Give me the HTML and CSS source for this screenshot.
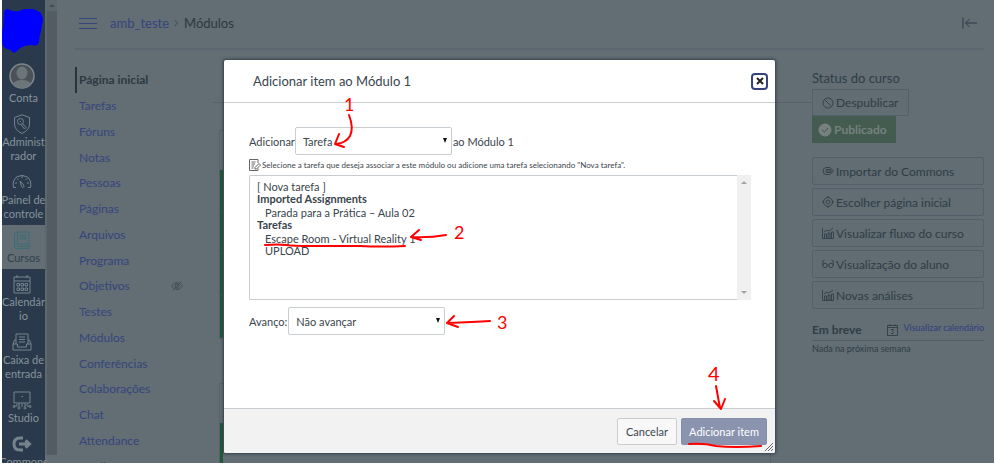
FILE: index.html
```html
<!DOCTYPE html>
<html lang="pt-BR">

<head>
    <meta charset="UTF-8">
    <title>amb_teste: Módulos</title>
    <link rel="stylesheet" href="styles.css">
</head>

<body>
    <div class="app">
        <nav class="global-nav">
            <div class="logo">
                <svg width="43" height="47" viewBox="0 0 43 47"><path d="M2 5Q4 0 8 3Q12 5 17 4L22 2L31 2Q40 4 41 12L39 24Q37 29 37 35Q36 40 30 38Q22 38 17 42L15 44Q11 48 9 43Q1 42 0 36Q-1 28 1 20Z" fill="#0000ff"/></svg>
            </div>
            <a href="#" class="nav-item account">
                <svg width="26" height="26" viewBox="0 0 26 26"><circle cx="13" cy="13" r="12" fill="#4a5257" stroke="#7d878c" stroke-width="1.5"/><ellipse cx="13" cy="10" rx="5.5" ry="6.5" fill="#6b757a"/><path d="M4 21Q6 17 13 17T22 21Q18 25 13 25T4 21Z" fill="#6b757a"/></svg>
                <span>Conta</span>
            </a>
            <a href="#" class="nav-item">
                <svg class="icon" viewBox="0 0 20 20"><path d="M10 0.800L17.500 3.500V10Q17.500 16 10 19.500Q2.500 16 2.500 10V3.500Z"/><circle cx="8.500" cy="7.500" r="3"/><path d="M10.500 9.500L14 13.500L12.500 15L9 10.500M8 7L9 8"/></svg>
                <span>Administ<br>rador</span>
            </a>
            <a href="#" class="nav-item">
                <svg class="icon" viewBox="0 0 20 20"><path d="M4 15.500H1.500Q0 8 5 4.800Q10 2 15 4.800Q20 8 18.500 15.500H16M8 9L9.500 14.500Q11 17 12 14.500Q12 12.500 8 9ZM3 11H5M15 11H17M10 4V6M5 6.500L6.500 8M15 6.500L13.500 8"/></svg>
                <span>Painel de<br>controle</span>
            </a>
            <a href="#" class="nav-item active">
                <svg class="icon" viewBox="0 0 20 20"><path d="M17 14V2H5Q2.500 2 2.500 4.500V16Q2.500 18.500 5 18.500H17M17 14H5Q2.500 14 2.500 16M17 14V18.500M5 16.300H17M5.500 2V14M8 5H14V9H8ZM9.500 7H12.500"/></svg>
                <span>Cursos</span>
            </a>
            <a href="#" class="nav-item">
                <svg class="icon" viewBox="0 0 20 20"><path d="M2 3H18V19H2ZM2 7H18M5 1V4M15 1V4M5 9.500H7.500V12H5ZM9 9.500H11.500V12H9ZM13 9.500H15.500V12H13ZM5 14H7.500V16.500H5ZM9 14H11.500V16.500H9ZM13 14H15.500V16.500H13Z"/></svg>
                <span>Calendár<br>io</span>
            </a>
            <a href="#" class="nav-item">
                <svg class="icon" viewBox="0 0 20 20"><path d="M4 12V2H16V12M7 5H13M7 7.500H13M7 10H13M4 8H2.500L1 12V18H19V12L17.500 8H16M1 12H5.500V15H14.500V12H19"/></svg>
                <span>Caixa de<br>entrada</span>
            </a>
            <a href="#" class="nav-item">
                <svg class="icon" viewBox="0 0 20 20"><path d="M2 2H18V13H2ZM9.500 6.500H11M7 13V17M10 13V17M13 13V17M5 14V16H2.500M15 14V16H17.500"/><circle cx="2" cy="16.500" r="1"/><circle cx="7" cy="18" r="1"/><circle cx="13" cy="18" r="1"/><circle cx="18" cy="16.500" r="1"/></svg>
                <span>Studio</span>
            </a>
            <a href="#" class="nav-item">
                <svg class="icon thick" viewBox="0 0 20 20"><path d="M11 4H8Q2 4 2 10T8 16H11M7 10H17M13.500 6.500L17.500 10L13.500 13.500"/></svg>
                <span>Commons</span>
            </a>
        </nav>
        <div class="nav-scroll"><span class="arrow-up"></span></div>

        <div class="page">
            <header class="topbar">
                <button class="burger" aria-label="Menu"><span></span><span></span><span></span></button>
                <a href="#" class="crumb">amb_teste</a>
                <svg class="chevron" width="6" height="8" viewBox="0 0 6 8"><path d="M1.500 1L4.500 4L1.500 7"/></svg>
                <span class="crumb-current">Módulos</span>
                <svg class="collapse" width="16" height="12" viewBox="0 0 16 12"><path d="M1 0.500V11.500M15 6H4M7.500 2L3.500 6L7.500 10"/></svg>
            </header>

            <div class="columns">
                <ul class="course-menu">
                    <li class="current"><a href="#">Página inicial</a></li>
                    <li><a href="#">Tarefas</a></li>
                    <li><a href="#">Fóruns</a></li>
                    <li><a href="#">Notas</a></li>
                    <li><a href="#">Pessoas</a></li>
                    <li><a href="#">Páginas</a></li>
                    <li><a href="#">Arquivos</a></li>
                    <li><a href="#">Programa</a></li>
                    <li><a href="#">Objetivos</a>
                        <svg width="12" height="10" viewBox="0 0 12 10"><path d="M0.500 5Q3 1.500 6 1.500T11.500 5Q9 8.500 6 8.500T0.500 5ZM1.500 9.500L10.500 0.500"/><circle cx="6" cy="5" r="2"/></svg>
                    </li>
                    <li><a href="#">Testes</a></li>
                    <li><a href="#">Módulos</a></li>
                    <li><a href="#">Conferências</a></li>
                    <li><a href="#">Colaborações</a></li>
                    <li><a href="#">Chat</a></li>
                    <li><a href="#">Attendance</a></li>
                    <li><a href="#">Studio</a></li>
                </ul>

                <main class="modules">
                    <section class="module">
                        <div class="module-head"></div>
                        <div class="module-row"></div>
                        <div class="module-row"></div>
                        <div class="module-row"></div>
                        <div class="module-row"></div>
                    </section>
                    <section class="module">
                        <div class="module-head"></div>
                        <div class="module-row"></div>
                        <div class="module-row"></div>
                    </section>
                </main>

                <aside class="sidebar">
                    <h2>Status do curso</h2>
                    <button class="side-btn unpublish">
                        <svg viewBox="0 0 12 12"><circle cx="6" cy="6" r="5"/><path d="M2.500 2.500L9.500 9.500"/></svg>Despublicar
                    </button>
                    <button class="side-btn published">
                        <svg viewBox="0 0 14 14"><circle cx="7" cy="7" r="6.500" fill="#76817f" stroke="none"/><path d="M4 7L6.300 9L10 5" stroke="#445c4f"/></svg>Publicado
                    </button>
                    <div class="side-list">
                        <button class="side-btn"><svg viewBox="0 0 12 12"><path d="M8 2.500H4Q1 3 1 6T4 9.500H8L11.500 6ZM4 4.500H9M3 6H10M4 7.500H9"/></svg>Importar do Commons</button>
                        <button class="side-btn"><svg viewBox="0 0 12 12"><circle cx="6" cy="6" r="4.500"/><circle cx="6" cy="6" r="2"/><path d="M6 0V2M6 10V12M0 6H2M10 6H12"/></svg>Escolher página inicial</button>
                        <button class="side-btn"><svg viewBox="0 0 12 12"><path d="M0.500 1V11.500H12M2.500 11V7H4.500V11M6 11V6H8V11M9.500 11V5H11.500V11M2 5L5 3L7 4L11 1"/></svg>Visualizar fluxo do curso</button>
                        <button class="side-btn"><svg viewBox="0 0 12 12"><circle cx="3" cy="7.500" r="2.200"/><circle cx="9" cy="7.500" r="2.200"/><path d="M0.800 7.500V3L2.500 2M11.200 7.500V3L9.500 2M5.200 7H6.800"/></svg>Visualização do aluno</button>
                        <button class="side-btn"><svg viewBox="0 0 12 12"><path d="M0.500 1V11.500H12M2.500 11V7H4.500V11M6 11V6H8V11M9.500 11V5H11.500V11M2 5L5 3L7 4L11 1"/></svg>Novas análises</button>
                    </div>
                    <div class="coming-up">
                        <h3>Em breve</h3>
                        <a href="#"><svg width="11" height="12" viewBox="0 0 11 12"><path d="M0.500 1.500H10.500V11.500H0.500ZM0.500 3.500H10.500M3 0V2M8 0V2M4 5.500H6.500L5.500 7.500Q7 8 6 9.500H4"/></svg><span>Visualizar calendário</span></a>
                    </div>
                    <p>Nada na próxima semana</p>
                </aside>
            </div>
        </div>
    </div>

    <div class="overlay">
        <div class="dialog" role="dialog" aria-labelledby="dialogTitle">
            <div class="dialog-head">
                <h1 id="dialogTitle">Adicionar item ao Módulo 1</h1>
                <button class="close" aria-label="Fechar"><svg width="8" height="8" viewBox="0 0 8 8"><path d="M1 1L7 7M7 1L1 7"/></svg></button>
            </div>
            <form class="dialog-body">
                <div class="field">
                    <label for="itemType">Adicionar</label>
                    <span class="select-box">
                        <select id="itemType"><option>Tarefa</option></select>
                    </span>
                    <span>ao Módulo 1</span>
                </div>
                <label class="hint" for="assignments">
                    <svg width="12" height="12" viewBox="0 0 12 12"><path d="M9 4V0.500H0.500V11.500H9V9.500M2.500 3H6.500M2.500 5H6M2.500 7H5M6 8.500L10 4.500L11.500 6L7.500 10H6ZM2.500 9H4.500"/></svg>
                    <span>Selecione a tarefa que deseja associar a este módulo ou adicione uma tarefa selecionando "Nova tarefa".</span>
                </label>
                <div class="list-wrap">
                    <select id="assignments" class="list" size="9">
                        <option>[ Nova tarefa ]</option>
                        <optgroup label="Imported Assignments">
                            <option>Parada para a Prática – Aula 02</option>
                        </optgroup>
                        <optgroup label="Tarefas">
                            <option>Escape Room - Virtual Reality 1</option>
                            <option>UPLOAD</option>
                        </optgroup>
                    </select>
                    <div class="list-scroll"><span class="arrow-up"></span><span class="arrow-down"></span></div>
                </div>
                <div class="field indent">
                    <label for="indent">Avanço:</label>
                    <span class="select-box">
                        <select id="indent"><option>Não avançar</option></select>
                    </span>
                </div>
            </form>
            <div class="dialog-foot">
                <button class="btn">Cancelar</button>
                <button class="btn primary">Adicionar item</button>
            </div>
            <svg class="grip" width="10" height="10" viewBox="0 0 10 10"><path d="M1 9L9 1M4 9L9 4M7 9L9 7"/></svg>

            <!-- passo a passo -->
            <svg class="notes" width="551" height="393" viewBox="0 0 551 393">
                <path d="M125 55Q130 68 126 76Q122 83 112 84M115 74L111 84L120 87"/>
                <path d="M41 185Q55 184 62 185T86 186T110 186T136 186Q158 187 181 186"/>
                <path d="M222 175Q205 178 187 177M195 170L187 177L197 180"/>
                <path d="M266 261Q250 262 224 263M230 256L223 263L234 267"/>
                <path d="M492 326L496 348M490 341L497 349L501 339"/>
                <path d="M465 384Q480 383 492 386Q510 388 537 386"/>
                <text x="120" y="51">1</text>
                <text x="230" y="179">2</text>
                <text x="273" y="269">3</text>
                <text x="484" y="321" class="tall">4</text>
            </svg>
        </div>
    </div>
</body>

</html>
```

FILE: styles.css
```css
* {
    box-sizing: border-box;
}

body {
    margin: 0;
    background: #fff;
    font-family: Lato, "Liberation Sans", sans-serif;
    font-size: 12px;
    color: #3a454d;
}

a {
    text-decoration: none;
}

button,
select {
    font-family: inherit;
    margin: 0;
}

svg {
    fill: none;
    stroke-width: 1;
    flex: none;
}

.app {
    display: flex;
    height: calc(100vh - 1px);
    margin: 0 2px;
    overflow: hidden;
    background: #626d74;
}

/* global navigation */
.global-nav {
    width: 43px;
    flex: none;
    background: #2a3a4c;
}

.logo {
    height: 62px;
    padding-top: 7px;
}

.nav-item {
    display: flex;
    flex-direction: column;
    align-items: center;
    gap: 1px;
    padding: 5px 0 4px;
    color: #87929a;
    font-size: 11px;
    line-height: 14px;
    text-align: center;
    white-space: nowrap;
}

.nav-item svg {
    margin-right: 4px;
}

.nav-item .icon {
    width: 20px;
    height: 20px;
    stroke: #77838b;
}

.nav-item .thick {
    stroke-width: 3;
}

.nav-item.account {
    padding-top: 1px;
    gap: 2px;
}

.nav-item.active {
    background: #626d74;
    color: #2f404c;
}

.nav-item.active .icon {
    stroke: #3a6e74;
}

.nav-scroll {
    width: 12px;
    flex: none;
    padding-top: 11px;
    border-left: 2px solid #5c676e;
    background: linear-gradient(#5c676e, #5c676e) top / 100% 11px no-repeat, #525c62;
    margin-bottom: 8px;
    position: relative;
}

.arrow-up,
.arrow-down {
    width: 0;
    border: 3px solid transparent;
}

.arrow-up {
    border-top: 0;
    border-bottom-color: #a3a3a3;
}

.arrow-down {
    border-bottom: 0;
    border-top-color: #a3a3a3;
}

.nav-scroll .arrow-up {
    position: absolute;
    top: 4px;
    left: 2px;
    border-bottom-color: #434d53;
}

/* page */
.page {
    flex: 1;
    padding: 0 10px 0 18px;
}

.topbar {
    display: flex;
    align-items: center;
    height: 50px;
    padding: 0 6px 2px 4px;
    border-bottom: 2px solid #5a6570;
    font-size: 13px;
}

.burger {
    display: flex;
    flex-direction: column;
    gap: 4px;
    width: 18px;
    margin-right: 13px;
    padding: 0;
    border: 0;
    background: none;
}

.burger span {
    width: 100%;
    height: 1px;
    background: #36457c;
}

.crumb {
    color: #36457c;
}

.chevron {
    margin: 0 5px 0 4px;
    stroke: #3e4a52;
}

.crumb-current {
    color: #2b3942;
}

.collapse {
    margin-left: auto;
    stroke: #2c3a44;
}

.columns {
    display: flex;
}

.course-menu {
    display: flex;
    flex-direction: column;
    justify-content: space-between;
    width: 108px;
    height: 412px;
    margin: 17px 30px 0 0;
    padding: 0;
    list-style: none;
}

.course-menu li {
    display: flex;
    align-items: center;
    justify-content: space-between;
    height: 26px;
    padding-left: 2px;
    border-left: 2px solid transparent;
}

.course-menu a {
    color: #36457c;
}

.course-menu svg {
    stroke: #414d56;
}

.course-menu .current {
    border-color: #26343e;
}

.course-menu .current a {
    color: #2b3942;
    font-weight: bold;
}

.modules {
    flex: 1;
    margin-top: 52px;
    padding: 27px 41px 0 6px;
    border-top: 1px solid #56616a;
}

.module {
    margin-bottom: 44px;
    border: 1px solid #56616a;
}

.module-head {
    height: 39px;
}

.module-row {
    height: 42px;
    border-left: 3px solid #1d5a35;
    border-bottom: 1px solid #4f5f62;
}

/* right side */
.sidebar {
    width: 172px;
    flex: none;
    padding-top: 20px;
    color: #2f3d46;
}

.sidebar h2 {
    margin: 0 0 3px;
    font-size: 13px;
    font-weight: normal;
    line-height: 16px;
}

.side-btn {
    display: flex;
    align-items: center;
    gap: 2px;
    height: 28px;
    padding: 0 9px;
    border: 1px solid #535f6b;
    border-radius: 2px;
    background: #616c73;
    color: #2f3d46;
    font-size: 12px;
    white-space: nowrap;
}

.side-btn svg {
    width: 12px;
    height: 12px;
    stroke: #35434c;
}

.side-btn.unpublish {
    height: 27px;
    border-radius: 0;
}

.side-btn.published {
    height: 27px;
    padding: 0 9px 0 6px;
    border: 0;
    border-radius: 0;
    background: #445c4f;
    color: #76817f;
    font-weight: bold;
}

.side-btn.published svg {
    width: 14px;
    height: 14px;
}

.side-list {
    display: flex;
    flex-direction: column;
    gap: 3px;
    margin-top: 14px;
}

.coming-up {
    display: flex;
    align-items: center;
    justify-content: space-between;
    height: 32px;
    padding-top: 10px;
    border-bottom: 1px solid #505c68;
}

.coming-up h3 {
    margin: 0;
    font-size: 12px;
}

.coming-up a {
    display: flex;
    align-items: center;
    gap: 5px;
    color: #303f7c;
    font-size: 9px;
}

.coming-up a span {
    padding-bottom: 4px;
}

.coming-up svg {
    stroke: #35434c;
}

.sidebar p {
    margin: 2px 0;
    font-size: 9px;
    line-height: 12px;
}

/* dialog */
.overlay {
    position: absolute;
    inset: 0;
    display: flex;
    align-items: flex-start;
    justify-content: center;
    padding: 60px 0 0 3px;
}

.dialog {
    position: relative;
    width: 551px;
    border-radius: 2px;
    background: #fff;
    box-shadow: 0 0 3px 1px #333f48;
}

.dialog-head {
    display: flex;
    align-items: center;
    justify-content: space-between;
    height: 43px;
    padding: 0 7px 0 29px;
    border-bottom: 1px solid #c7cdd1;
}

.dialog-head h1 {
    margin: 0;
    font-size: 13px;
    font-weight: normal;
}

.close {
    display: flex;
    align-items: center;
    justify-content: center;
    width: 17px;
    height: 17px;
    padding: 0;
    border: 2px solid #34447a;
    border-radius: 4px;
    background: #fff;
}

.close svg {
    stroke: #222;
    stroke-width: 2;
}

.dialog-body {
    min-height: 305px;
    padding: 24px 24px 0 25px;
    font-size: 11px;
}

.field {
    display: flex;
    align-items: center;
}

.field > span:last-child {
    margin-left: 1px;
}

.select-box {
    position: relative;
    width: 157px;
}

.select-box::after {
    content: "";
    position: absolute;
    top: 11px;
    right: 5px;
    border: 2px solid transparent;
    border-top: 5px solid #111;
    border-bottom: 0;
}

.select-box select {
    display: block;
    width: 100%;
    height: 28px;
    padding: 0 7px;
    appearance: none;
    border: 1px solid #c7cdd1;
    border-radius: 2px;
    background: #fff;
    color: #3a454d;
    font-size: 11px;
}

.hint {
    display: flex;
    align-items: center;
    gap: 1px;
    height: 20px;
    font-size: 8px;
    white-space: nowrap;
}

.hint svg {
    stroke: #666;
}

.list-wrap {
    display: flex;
    height: 125px;
}

.list {
    flex: 1;
    height: 100%;
    padding: 4px 7px;
    border: 1px solid #c7cdd1;
    border-right: 0;
    border-radius: 2px 0 0 2px;
    outline: none;
    overflow: hidden;
    background: #fff;
    color: #3a454d;
    font-size: 11px;
}

.list option {
    height: 12px;
    min-height: 12px;
    padding: 0;
    color: #3a454d;
    line-height: 12px;
}

.list optgroup {
    margin-left: -2px;
    color: #3a454d;
    font-weight: bold;
}

.list optgroup option {
    padding-left: 10px;
    font-weight: normal;
}

.list-scroll {
    display: flex;
    flex-direction: column;
    align-items: center;
    justify-content: space-between;
    width: 14px;
    padding: 6px 0;
    background: #f0f0f0;
}

.indent {
    margin-top: 7px;
}

.indent .select-box {
    margin-left: 0;
}

.dialog-foot {
    display: flex;
    align-items: center;
    justify-content: flex-end;
    gap: 4px;
    height: 45px;
    padding: 0 8px 0 0;
    border-top: 1px solid #c7cdd1;
    border-radius: 0 0 2px 2px;
    background: #f2f2f2;
}

.btn {
    flex: 0 0 60px;
    height: 27px;
    padding: 0;
    border: 1px solid #c7cdd1;
    border-radius: 2px;
    background: #f8f8f8;
    color: #3a454d;
    font-size: 11px;
    white-space: nowrap;
}

.btn.primary {
    flex-basis: 86px;
    border-color: #8590ab;
    background: #8a94af;
    color: #fff;
}

.grip {
    position: absolute;
    right: 1px;
    bottom: 1px;
    stroke: #666;
}

/* red pen marks over the dialog */
.notes {
    position: absolute;
    top: 0;
    left: 0;
    stroke: #f00;
    stroke-width: 2;
    stroke-linecap: round;
    stroke-linejoin: round;
    pointer-events: none;
}

.notes text {
    fill: #f00;
    stroke-width: 0;
    font-size: 18px;
}

.notes .tall {
    font-size: 20px;
}
```
